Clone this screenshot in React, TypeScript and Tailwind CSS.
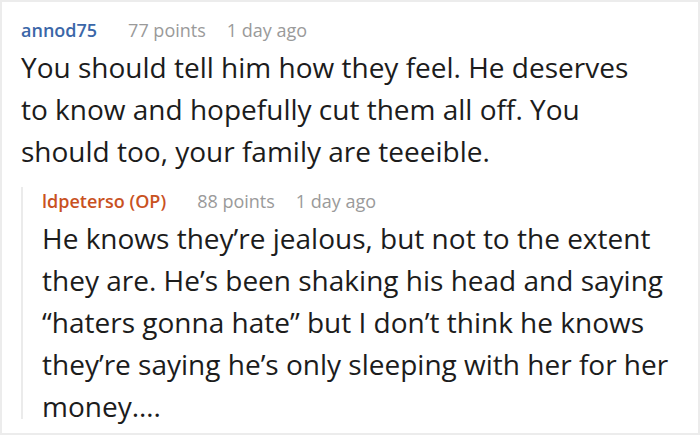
import React from 'react';

type Comment = {
  user: string;
  op?: boolean;
  points: number;
  time: string;
  lines: string[];
};

const COMMENT: Comment = {
  user: 'annod75',
  points: 77,
  time: '1 day ago',
  lines: [
    'You should tell him how they feel. He deserves',
    'to know and hopefully cut them all off. You',
    'should too, your family are teeeible.',
  ],
};

const REPLY: Comment = {
  user: 'ldpeterso (OP)',
  op: true,
  points: 88,
  time: '1 day ago',
  lines: [
    'He knows they’re jealous, but not to the extent',
    'they are. He’s been shaking his head and saying',
    '“haters gonna hate” but I don’t think he knows',
    'they’re saying he’s only sleeping with her for her',
    'money….',
  ],
};

function Meta({ c }: { c: Comment }) {
  return (
    <div className="flex items-baseline text-[18px] leading-[28px] whitespace-nowrap">
      <span className={`font-semibold ${c.op ? 'text-[#c9521f]' : 'text-[#3b67a8]'}`}>{c.user}</span>
      <span className="ml-[31px] text-[#9a9a9a]">{c.points} points</span>
      <span className="ml-[21px] text-[#9a9a9a]">{c.time}</span>
    </div>
  );
}

function Body({ lines }: { lines: string[] }) {
  return (
    <p className="mt-[2px] text-[28px] leading-[42px] text-[#1c1c1c] whitespace-nowrap">
      {lines.map((l, i) => (
        <React.Fragment key={i}>
          {l}
          {i < lines.length - 1 && <br />}
        </React.Fragment>
      ))}
    </p>
  );
}

export default function App() {
  return (
    <div
      className="w-[700px] h-[435px] overflow-hidden bg-white border-2 border-[#ececec] pl-[19px] pt-[14px]"
      style={{ fontFamily: '"Open Sans", "Noto Sans", sans-serif' }}
    >
      <Meta c={COMMENT} />
      <Body lines={COMMENT.lines} />
      <div className="mt-[28px] border-l-2 border-[#ebebeb] pl-[19px] h-[232px]">
        <div className="-mt-[13px]">
          <Meta c={REPLY} />
          <Body lines={REPLY.lines} />
        </div>
      </div>
    </div>
  );
}
